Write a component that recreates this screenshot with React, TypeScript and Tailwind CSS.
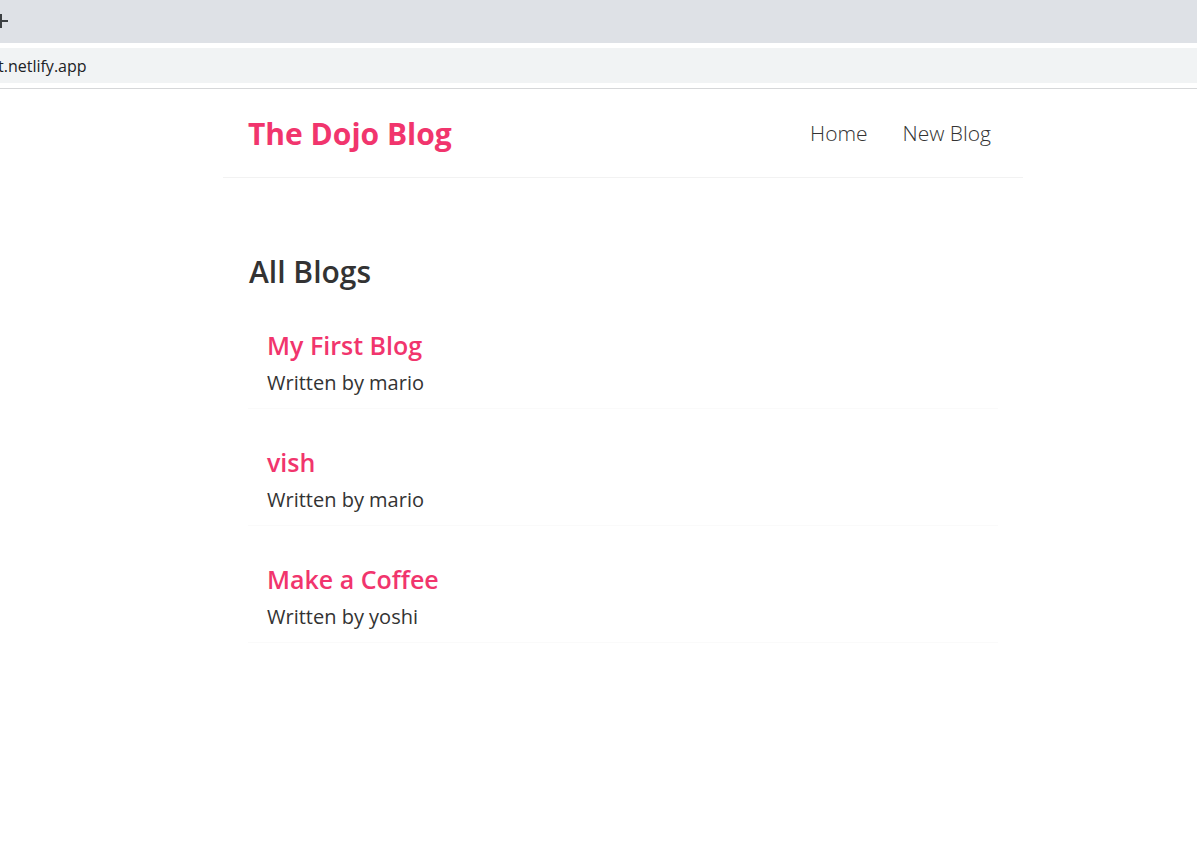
const blogs = [
  { id: 1, title: 'My First Blog', author: 'mario' },
  { id: 2, title: 'vish', author: 'mario' },
  { id: 3, title: 'Make a Coffee', author: 'yoshi' },
];

function BrowserChrome() {
  return (
    <div className="font-['Open_Sans',sans-serif]">
      <div className="h-[43px] bg-[#dee1e6] relative">
        <svg className="absolute left-0 top-[14px]" width="10" height="14" viewBox="0 0 10 14">
          <path d="M-6 7H8M1 0V14" stroke="#3c4043" strokeWidth="2" fill="none" />
        </svg>
      </div>
      <div className="h-[5px] bg-white" />
      <div className="h-[35px] bg-[#f1f3f4] flex items-center">
        <span className="ml-[-2px] text-[16px] text-[#202124]">t.netlify.app</span>
      </div>
      <div className="h-[5px] bg-white" />
      <div className="h-px bg-[#d6d7d9]" />
    </div>
  );
}

function Navbar() {
  return (
    <nav className="w-[800px] ml-[223px] h-[89px] px-[25px] flex items-center justify-between border-b border-[#f2f2f2]">
      <h1 className="text-[30px] font-bold text-[#f1356d]">The Dojo Blog</h1>
      <div className="flex items-center gap-[35px] pr-[7px] pt-[2px] text-[21px] font-light text-[#333]">
        <a href="#">Home</a>
        <a href="#">New Blog</a>
      </div>
    </nav>
  );
}

export default function App() {
  return (
    <div className="min-h-screen bg-white font-['Open_Sans',sans-serif]">
      <BrowserChrome />
      <Navbar />
      <div className="w-[800px] ml-[223px] px-[25px] pt-[73px]">
        <h2 className="text-[30px] leading-[42px] font-semibold text-[#333] pl-px">All Blogs</h2>
        <div className="mt-[28px]">
          {blogs.map((blog) => (
            <div key={blog.id} className="px-[19px] pt-[6px] pb-[11px] mb-[29px] border-b border-[#fafafa]">
              <h2 className="text-[25px] font-semibold text-[#f1356d] leading-[36px]">{blog.title}</h2>
              <p className="text-[20px] text-[#333] mt-[6px] leading-[28px]">Written by {blog.author}</p>
            </div>
          ))}
        </div>
      </div>
    </div>
  );
}
